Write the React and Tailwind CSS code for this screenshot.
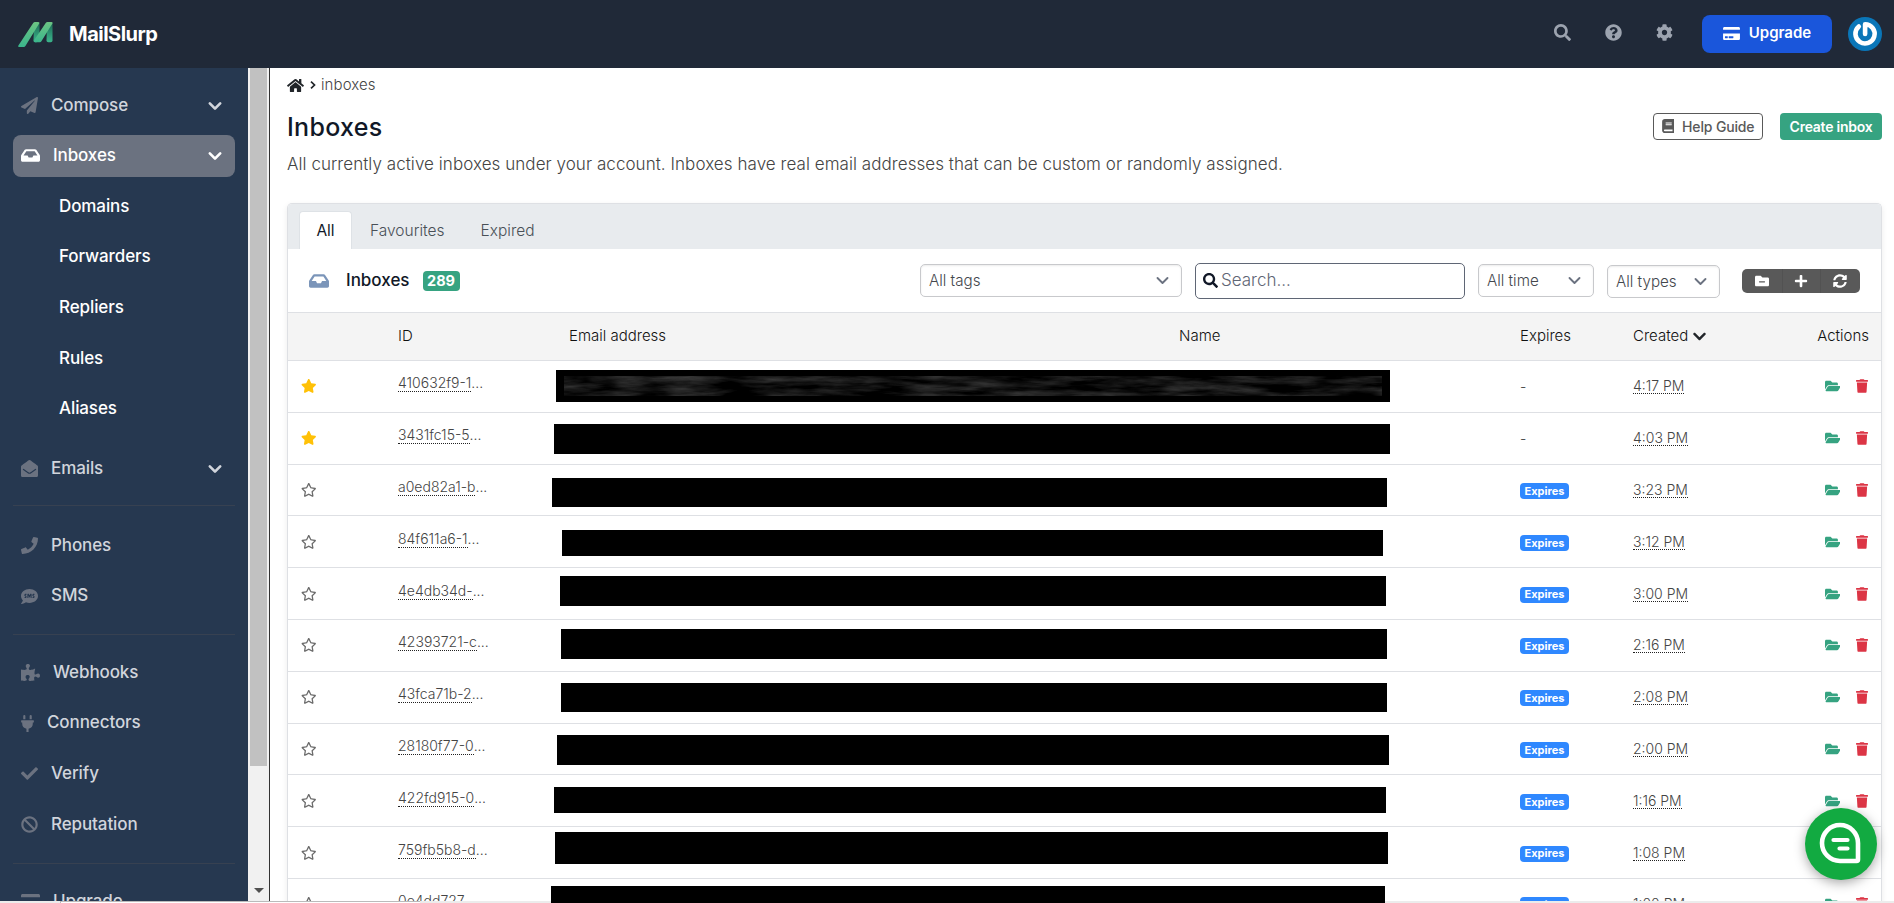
import React from "react";
import {
  FaBan,
  FaBook,
  FaCheck,
  FaChevronDown,
  FaCog,
  FaCreditCard,
  FaEnvelopeOpen,
  FaFolderMinus,
  FaFolderOpen,
  FaHome,
  FaInbox,
  FaPaperPlane,
  FaPhone,
  FaPlug,
  FaPlus,
  FaPuzzlePiece,
  FaQuestionCircle,
  FaRegStar,
  FaSearch,
  FaSms,
  FaStar,
  FaSyncAlt,
  FaTrash,
} from "react-icons/fa";
import clsx from "clsx";

const subItems = ["Domains", "Forwarders", "Repliers", "Rules", "Aliases"];

// bar: left, top (inside the row), width and height of the redacted area
const inboxes = [
  { id: "410632f9-1", time: "4:17 PM", starred: true, bar: [556, 9, 834, 32] },
  { id: "3431fc15-5", time: "4:03 PM", starred: true, bar: [554, 11, 836, 30] },
  { id: "a0ed82a1-b", time: "3:23 PM", bar: [552, 13, 835, 29] },
  { id: "84f611a6-1", time: "3:12 PM", bar: [562, 14, 821, 26] },
  { id: "4e4db34d-", time: "3:00 PM", bar: [560, 8, 826, 30] },
  { id: "42393721-c", time: "2:16 PM", bar: [561, 9, 826, 30] },
  { id: "43fca71b-2", time: "2:08 PM", bar: [561, 11, 826, 29] },
  { id: "28180f77-0", time: "2:00 PM", bar: [557, 11, 832, 30] },
  { id: "422fd915-0", time: "1:16 PM", bar: [554, 12, 832, 26] },
  { id: "759fb5b8-d", time: "1:08 PM", bar: [555, 5, 833, 32] },
  { id: "0e4dd727", time: "1:00 PM", bar: [551, 7, 834, 30] },
];

function Logo() {
  return (
    <svg viewBox="0 0 35 25" className="h-[25px] w-[35px]">
      <defs>
        <linearGradient id="slurp" x1="0" y1="0" x2="0" y2="1">
          <stop offset="0" stopColor="#6cc483" />
          <stop offset="1" stopColor="#3bb58c" />
        </linearGradient>
        <linearGradient id="slurpDark" x1="0" y1="0" x2="0" y2="1">
          <stop offset="0" stopColor="#1d6b55" />
          <stop offset="1" stopColor="#3bb58c" />
        </linearGradient>
      </defs>
      <path d="M16 1h5.500v15l-3 4.300h-1.200q-1.800 0-1.800-1.800z" fill="url(#slurpDark)" />
      <path d="M29 1h5.500v17.500q0 1.800-1.800 1.800h-2.400q-1.800 0-1.800-1.800z" fill="url(#slurpDark)" />
      <path d="M15.200 1q.7-1 1.800-1h3q2 0 1.200 1.600L7.400 24q-.6 1-1.600 1H1.200q-1.700 0-.8-1.500z" fill="url(#slurp)" />
      <path d="M27.700 1q.7-1 1.800-1h3.800q1.800 0 1.100 1.600L23.400 19.300q-.6 1-1.600 1h-4.600q-1.700 0-1.400-1.500z" fill="url(#slurp)" />
    </svg>
  );
}

function NavChevron() {
  return (
    <svg viewBox="0 0 20 20" fill="currentColor" className="ml-auto size-[26px]">
      <path
        fillRule="evenodd"
        clipRule="evenodd"
        d="M5.293 7.293a1 1 0 011.414 0L10 10.586l3.293-3.293a1 1 0 111.414 1.414l-4 4a1 1 0 01-1.414 0l-4-4a1 1 0 010-1.414z"
      />
    </svg>
  );
}

function NavItem({ icon: Icon, label, chevron, active, iconWidth = "w-[17px]" }) {
  return (
    <div
      className={clsx(
        "mb-[8.600px] flex h-[42px] shrink-0 items-center rounded-lg pr-[7px] pl-2 text-[17px] font-medium tracking-[-0.1px]",
        active ? "bg-[#6b7280] text-white" : "text-gray-300"
      )}
    >
      <Icon className={clsx("h-[17px]", iconWidth, active ? "text-white" : "text-[#6b7280]")} />
      <span className="ml-[13px]">{label}</span>
      {chevron && <NavChevron />}
    </div>
  );
}

function Divider({ className }) {
  return <div className={clsx("h-px shrink-0 bg-[#374151]", className)} />;
}

function Sidebar() {
  return (
    <aside className="flex w-[270px] shrink-0 border-r border-[#333] bg-[#263850]">
      <nav className="flex w-[248px] flex-col overflow-hidden px-[13px] pt-[16.500px]">
        <NavItem icon={FaPaperPlane} label="Compose" chevron />
        <div className="-mt-[0.300px]" />
        <NavItem icon={FaInbox} iconWidth="w-[19px]" label="Inboxes" chevron active />
        {subItems.map((item) => (
          <div
            key={item}
            className="mb-[8.700px] flex h-[42px] shrink-0 items-center pl-[46px] text-[17px] font-medium tracking-[-0.1px] text-white"
          >
            {item}
          </div>
        ))}
        <div className="h-[9px] shrink-0" />
        <NavItem icon={FaEnvelopeOpen} label="Emails" chevron />
        <Divider className="mt-[7px] mb-[18px]" />
        <NavItem icon={FaPhone} label="Phones" />
        <NavItem icon={FaSms} label="SMS" />
        <Divider className="mt-[8px] mb-[17px]" />
        <NavItem icon={FaPuzzlePiece} iconWidth="w-[19px]" label="Webhooks" />
        <NavItem icon={FaPlug} iconWidth="w-[13px]" label="Connectors" />
        <NavItem icon={FaCheck} label="Verify" />
        <NavItem icon={FaBan} label="Reputation" />
        <Divider className="mt-[9px] mb-[17px]" />
        <NavItem icon={FaCreditCard} iconWidth="w-[19px]" label="Upgrade" />
      </nav>
      <div className="flex w-[21px] flex-col items-center bg-[#f1f1f1]">
        <div className="h-[698px] w-[17px] bg-[#c1c1c1]" />
        <div className="mt-auto mb-[10px] border-x-[5px] border-t-[5px] border-x-transparent border-t-[#505050]" />
      </div>
    </aside>
  );
}

function Header() {
  return (
    <header className="flex h-[68px] shrink-0 items-center bg-[#202938] pr-3 pl-[18px]">
      <Logo />
      <span className="mb-px ml-[16px] text-[20px] font-bold tracking-[-0.5px] text-white">MailSlurp</span>
      <div className="ml-auto flex items-center text-[#9ca3af]">
        <FaSearch className="mb-[3px] size-[17px]" />
        <FaQuestionCircle className="mb-[3px] ml-[34px] size-[17px]" />
        <FaCog className="mb-[3px] ml-[34px] size-[17px]" />
        <button className="ml-[29px] flex h-[38px] w-[130px] items-center justify-center gap-[9px] rounded-lg bg-[#1a56db] pb-[2px] text-[15px] font-semibold text-white">
          <FaCreditCard className="h-[15px] w-[17px]" />
          Upgrade
        </button>
        <svg viewBox="0 0 34 34" className="ml-4 size-[34px]">
          <circle cx="17" cy="17" r="17" fill="#0a76b8" />
          <path
            d="M10.800 9.500a9.600 9.600 0 1 0 6.300-2.300v9.800"
            fill="none"
            stroke="#fff"
            strokeWidth="4.600"
            strokeLinecap="round"
            strokeLinejoin="round"
          />
        </svg>
      </div>
    </header>
  );
}

function Select({ label, className }) {
  return (
    <div
      className={clsx(
        "flex h-[33px] items-center justify-between rounded-[5px] border border-[#c8c9cc] pr-[6px] pl-[8px] text-[15.200px] font-light text-[#44474d] shadow-[inset_0_1px_2px_rgba(0,0,0,0.08)]",
        className
      )}
    >
      <span className="pt-px">{label}</span>
      <svg viewBox="0 0 20 20" fill="none" className="size-[25px]">
        <path d="M6 8l4 4 4-4" stroke="#6b7280" strokeWidth="1.500" strokeLinecap="round" strokeLinejoin="round" />
      </svg>
    </div>
  );
}

function Toolbar() {
  return (
    <div className="flex h-[64px] shrink-0 items-center border-b border-[#dee0e4] pl-[21px] pr-[21px]">
      <FaInbox className="h-[18px] w-[20px] text-[#7b95b9]" />
      <span className="ml-[17px] text-[17px] font-medium text-[#111827]">Inboxes</span>
      <span className="ml-[13px] flex h-5 w-[37px] items-center justify-center rounded bg-[#36a381] text-[14.500px] font-bold text-white">
        289
      </span>
      <Select label="All tags" className="ml-auto w-[262px]" />
      <div className="ml-[13px] flex h-[36px] w-[270px] items-center rounded-[5px] border border-[#5f6675] pl-[7px] text-[17px] font-light text-[#5f6675]">
        <FaSearch className="mr-[3px] size-[15px] text-[#111827]" />
        <span className="pt-px">Search...</span>
      </div>
      <Select label="All time" className="ml-[13px] w-[116px]" />
      <Select label="All types" className="mt-[2px] ml-[13px] w-[113px]" />
      <div className="ml-[22px] flex h-[24px] w-[118px] items-center rounded-[5px] bg-[#595959] text-white">
        <div className="flex flex-1 justify-center">
          <FaFolderMinus className="size-[14px]" />
        </div>
        <div className="flex h-full w-[39px] items-center justify-center border-x border-[#525252]">
          <FaPlus className="size-[14px]" />
        </div>
        <div className="flex flex-1 justify-center">
          <FaSyncAlt className="size-[14px]" />
        </div>
      </div>
    </div>
  );
}

const dotted = "border-b border-dotted border-[#222]";

function Row({ inbox, index }) {
  const [left, top, width, height] = inbox.bar;
  return (
    <div className="relative flex h-[51.800px] shrink-0 items-center border-b border-[#dee0e4] text-[14px] font-light text-[#444]">
      <div className="w-[110px] pl-[13px]">
        {inbox.starred ? (
          <FaStar className="h-[14px] w-[15.500px] text-[#ffc107]" />
        ) : (
          <FaRegStar className="h-[14px] w-[15.500px] text-[#6b6b6b]" />
        )}
      </div>
      <div className="mb-[5px] flex w-[1122px] leading-[16px]">
        <span className={dotted}>{inbox.id}</span>...
      </div>
      <div className="w-[113px]">
        {inbox.starred ? (
          <span>-</span>
        ) : (
          <span className="mt-[2px] flex h-[16px] w-[49px] items-center justify-center rounded bg-[#2f88ff] text-[11px] font-bold text-white">
            Expires
          </span>
        )}
      </div>
      <span className={clsx("leading-[15px]", dotted)}>{inbox.time}</span>
      <div className="mr-[13px] ml-auto flex items-center">
        <FaFolderOpen className="h-[14px] w-[15.500px] text-[#36a381]" />
        <FaTrash className="ml-[16px] h-[14px] w-[12px] text-[#dc3545]" />
      </div>
      {/* Bars are measured from the page edge, the row starts at 288 */}
      <div
        className="absolute z-10 bg-black px-2 py-[6px]"
        style={{ left: left - 288, top, width, height }}
      >
        {index === 0 && (
          <svg viewBox="0 0 818 20" preserveAspectRatio="none" className="block size-full">
            <defs>
              <filter id="smudge" x="0" y="0" width="1" height="1" colorInterpolationFilters="sRGB">
                <feTurbulence type="fractalNoise" baseFrequency="0.02 0.13" numOctaves="4" seed="6" />
                <feColorMatrix values="0.4 0 0 0 -0.130  0.4 0 0 0 -0.130  0.4 0 0 0 -0.130  0 0 0 0 1" />
              </filter>
            </defs>
            <rect width="818" height="20" filter="url(#smudge)" />
          </svg>
        )}
      </div>
    </div>
  );
}

export default function App() {
  return (
    <div className="relative flex h-[903px] w-[1894px] flex-col overflow-hidden bg-white font-['Inter','Liberation_Sans',sans-serif]">
      <Header />
      <div className="flex min-h-0 flex-1">
        <Sidebar />
        <main className="flex min-w-0 flex-1 flex-col pr-[12px] pl-[17px]">
          <div className="mt-[6px] flex h-[22px] items-center text-[15px] font-light text-[#444]">
            <FaHome className="h-[15px] w-[17px] text-[#212529]" />
            <svg viewBox="0 0 6 8" fill="none" className="mr-[5px] ml-[6px] h-[8px] w-[6px]">
              <path d="M1 .7 4.500 4 1 7.300" stroke="#212529" strokeWidth="1.700" />
            </svg>
            <span className="tracking-[0.1px]">inboxes</span>
          </div>
          <div className="mt-[14px] flex h-[34px] items-center">
            <h1 className="mt-[2px] text-[25px] font-medium tracking-[0.3px] text-[#111827]">Inboxes</h1>
            <button className="mb-[2px] ml-auto flex h-[27px] w-[110px] items-center justify-center gap-[8px] rounded border border-[#595959] text-[14px] font-medium tracking-[-0.15px] text-[#595959]">
              <FaBook className="h-[14px] w-[12.500px]" />
              Help Guide
            </button>
            <button className="mb-[2px] ml-[17px] h-[27px] w-[102px] rounded bg-[#36a381] text-[14px] font-semibold tracking-[-0.25px] text-white">
              Create inbox
            </button>
          </div>
          <p className="mt-[8px] h-[24px] text-[17px] leading-[24px] font-light tracking-[0.057px] text-[#444]">
            All currently active inboxes under your account. Inboxes have real email addresses that can be custom or
            randomly assigned.
          </p>
          <section className="mt-[27px] flex min-h-0 flex-1 flex-col rounded-t-[5px] border border-b-0 border-[#dee0e4] shadow-[0_2px_6px_rgba(0,0,0,0.08)]">
            <div className="flex h-[45px] shrink-0 items-end rounded-t-[4px] bg-[#e8ebee] pl-[11px] text-[15.500px] font-light text-[#495057]">
              <span className="flex h-[38px] w-[53px] items-center justify-center rounded-t border border-b-0 border-[#dee2e6] bg-white font-normal text-[#111827]">
                All
              </span>
              <span className="flex h-[38px] items-center px-[18px] pt-px">Favourites</span>
              <span className="flex h-[38px] items-center px-[18px] pt-px">Expired</span>
            </div>
            <Toolbar />
            <div className="flex h-[48px] shrink-0 items-center border-b border-[#dee0e4] bg-[#f4f4f4] text-[15px] font-light text-[#111]">
              <span className="w-[110px]" />
              <span className="w-[171px]">ID</span>
              <span className="w-[610px]">Email address</span>
              <span className="w-[341px]">Name</span>
              <span className="w-[113px]">Expires</span>
              <span className="flex items-center gap-[5px]">
                Created <FaChevronDown className="h-[15px] w-[13px] text-[#212529]" />
              </span>
              <span className="mr-[12px] ml-auto">Actions</span>
            </div>
            <div className="flex min-h-0 flex-1 flex-col">
              {inboxes.map((inbox, index) => (
                <Row key={inbox.id} inbox={inbox} index={index} />
              ))}
            </div>
          </section>
        </main>
      </div>
      <div className="absolute bottom-0 left-0 flex h-[2px] w-full bg-[#ececec]">
        <div className="ml-[60px] w-[360px] border-t border-l border-[#bbb] bg-white" />
      </div>
      <button className="absolute top-[808px] left-[1805px] z-20 flex size-[72px] items-center justify-center rounded-full bg-[#12aa41] shadow-[0_3px_12px_rgba(0,0,0,0.35)]">
        <svg viewBox="0 0 42 42" fill="none" stroke="#fff" strokeLinecap="round" className="mr-[2px] mb-[2px] size-[42px]">
          <path d="M21 3a18 18 0 0 1 18 18v16.500a1.500 1.500 0 0 1-1.500 1.500H21a18 18 0 0 1 0-36z" strokeWidth="4.600" />
          <path d="M14.500 18h14M20.500 26.500h8" strokeWidth="4.200" />
        </svg>
      </button>
    </div>
  );
}
